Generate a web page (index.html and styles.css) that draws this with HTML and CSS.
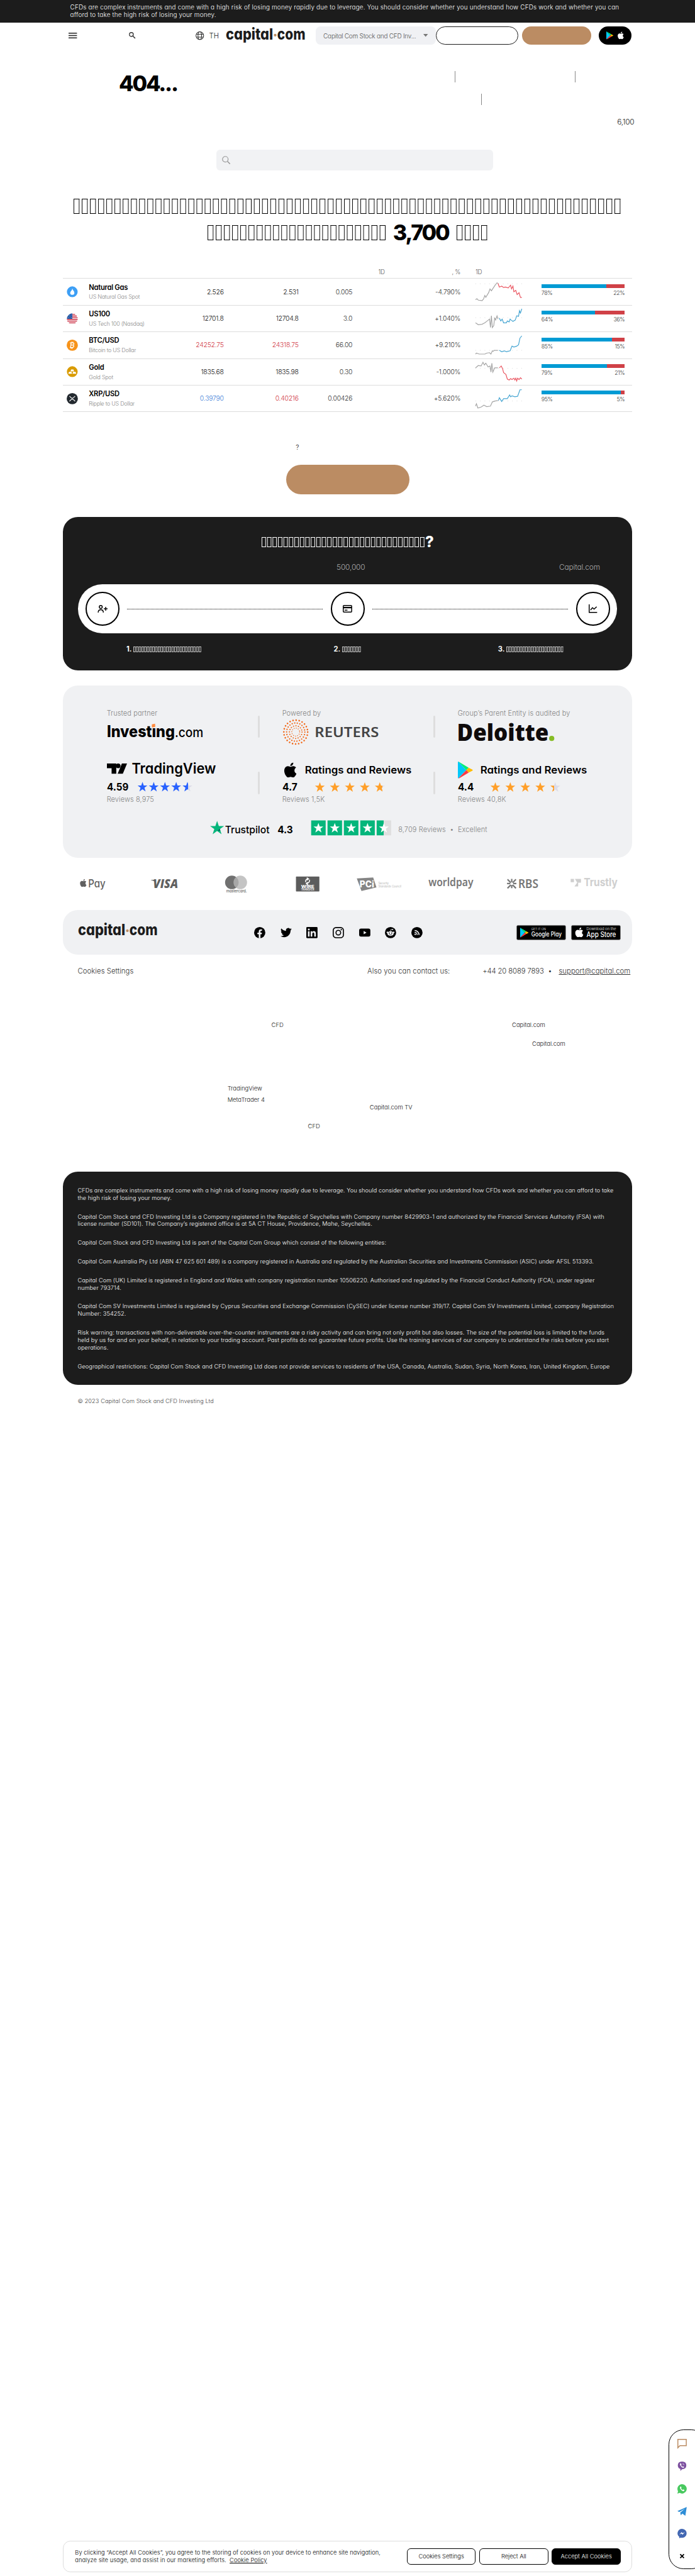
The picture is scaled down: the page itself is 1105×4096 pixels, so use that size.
FILE: index.html
```html
<!DOCTYPE html>
<html lang="th">
<head>
<meta charset="utf-8">
<title>Capital.com</title>
<link rel="stylesheet" href="styles.css">
</head>
<body>
<svg width="0" height="0" class="defs">
  <symbol id="apple" viewBox="0 0 24 24"><path d="M12.152 6.896c-.948 0-2.415-1.078-3.96-1.04-2.04.027-3.91 1.183-4.961 3.014-2.117 3.675-.546 9.103 1.519 12.09 1.013 1.454 2.208 3.09 3.792 3.039 1.52-.065 2.09-.987 3.935-.987 1.831 0 2.35.987 3.96.948 1.637-.026 2.676-1.48 3.676-2.948 1.156-1.688 1.636-3.325 1.662-3.415-.039-.013-3.182-1.221-3.22-4.857-.026-3.04 2.48-4.494 2.597-4.559-1.429-2.09-3.623-2.324-4.39-2.376-2-.156-3.675 1.09-4.61 1.09zM15.53 3.83c.843-1.012 1.4-2.427 1.245-3.83-1.207.052-2.662.805-3.532 1.818-.78.896-1.454 2.338-1.273 3.714 1.338.104 2.715-.688 3.559-1.701"/></symbol>
  <symbol id="gplay" viewBox="0 0 32 36"><path d="M1 0L18 18 1 36Q0 36 0 34V2Q0 0 1 0" fill="#00c8fa"/><path d="M1 0Q2 0 3 1L23 13 18 18 1 0" fill="#00ee76"/><path d="M23 13L31 17Q33 18 31 19.500L23 23.500 18 18z" fill="#ffbc00"/><path d="M18 18L23 23.500 3 35.500Q2 36 1 36z" fill="#ff3a44"/></symbol>
  <symbol id="star" viewBox="0 0 22 22"><path d="M11 0.500L13.700 8H21.500L15.200 12.800 17.600 21 11 16.200 4.400 21 6.800 12.800 0.500 8H8.300z"/></symbol>
  <linearGradient id="b59"><stop offset=".59" stop-color="#2962ff"/><stop offset=".59" stop-color="#dcdce8"/></linearGradient>
  <linearGradient id="o70"><stop offset=".78" stop-color="#ff9f29"/><stop offset=".78" stop-color="#dcdce8"/></linearGradient>
  <linearGradient id="o40"><stop offset=".38" stop-color="#ff9f29"/><stop offset=".38" stop-color="#dcdce8"/></linearGradient>
</svg>
<div class="page">
  <div class="risk">CFDs are complex instruments and come with a high risk of losing money rapidly due to leverage. You should consider whether you understand how CFDs work and whether you can<br>afford to take the high risk of losing your money.</div>
  <header class="head">
    <svg class="burger" width="18" height="12"><path d="M0 1H18M0 6H18M0 11H18" stroke="#222" stroke-width="2"/></svg>
    <svg class="find" width="14" height="14" fill="none" stroke="#333" stroke-width="1.700"><circle cx="5.200" cy="5.200" r="4.200"/><path d="M8.300 8.300L13.300 13.300" stroke-width="2"/></svg>
    <svg class="globe" width="18" height="18" fill="none" stroke="#333" stroke-width="1.400"><circle cx="9" cy="9" r="8.200"/><ellipse cx="9" cy="9" rx="3.800" ry="8.200"/><path d="M1.500 6H16.500M1.500 12H16.500"/></svg>
    <span class="lang">TH</span>
    <svg class="brand" width="170" height="33"><text x="0" y="25" textLength="101" lengthAdjust="spacingAndGlyphs">capital</text><circle cx="105.500" cy="16" r="2.900"/><text x="110" y="25" textLength="60" lengthAdjust="spacingAndGlyphs">com</text></svg>
    <div class="picker"><span>Capital Com Stock and CFD Inv...</span><svg width="10" height="6"><path d="M0 0H10L5 6z" fill="#777"/></svg></div>
    <div class="btn ghost"></div>
    <div class="btn tan"></div>
    <div class="btn apps"><svg width="15" height="17"><use href="#gplay"/></svg><svg width="16" height="17" fill="#fff"><use href="#apple"/></svg></div>
  </header>
  <section class="lost">
    <h1>404...</h1>
    <div class="ticks"><i></i><i></i></div>
    <div class="ticks low"><i></i></div>
    <p>6,100</p>
    <div class="searchbox"><svg width="18" height="18" fill="none" stroke="#999" stroke-width="1.600"><circle cx="7" cy="7" r="6"/><path d="M11.500 11.500L17 17" stroke-width="2"/></svg></div>
  </section>
  <h2 class="title"><span class="tofu n67"></span><br><span class="tofu n22"></span><b>3,700</b><span class="tofu n4"></span></h2>

  <div class="table">
    <div class="row hd"><span class="h1d">1D</span><span class="hpc">, %</span><span class="hch">1D</span></div>
    <div class="row">
      <svg class="ic" viewBox="0 0 24 24"><circle cx="12" cy="12" r="11.500" fill="#3d9ff5"/><path d="M12 5C12 9 7.500 11 7.500 15A4.600 4.600 0 0 0 16.500 15C16.500 12 15 11 14.500 8.500L13.500 10C13.500 8 13 6 12 5" fill="#fff"/></svg>
      <div class="nm"><b>Natural Gas</b><small>US Natural Gas Spot</small></div>
      <span class="c1">2.526</span><span class="c2">2.531</span><span class="c3">0.005</span><span class="c4">-4.790%</span>
      <svg class="sp" width="100" height="41"><path class="d" d="M0 3H100"/><path class="g" d="M0 37L3 35 6 38 14 39 17 36 20 28 22 32 28 22 31 14 34 18 38 12 42 6 46 1 48 2"/><path class="r" d="M48 2L51 10 56 8 60 11 64 10 70 12 75 6 77 14 80 8 82 20 86 17 89 26 93 22 96 32 99 32"/></svg>
      <div class="mood"><i><u style="width:78%"></u></i><p><span>78%</span><span>22%</span></p></div>
    </div>
    <div class="row">
      <svg class="ic" viewBox="0 0 24 24"><circle cx="12" cy="12" r="11.500" fill="#f4f0f1"/><path d="M12 2.500H18M12 6H21.500M12 9.500H23.400M.6 13.500H23.400M1.500 17H22M5 20.700H19" stroke="#d22f45" stroke-width="1.800"/><path d="M12 .5V12H.5A11.500 11.500 0 0 1 12 .5" fill="#2157a5"/><path d="M5 5h1M9 4h1M3 9h1M6.500 8h1M10 9h1" stroke="#fff"/></svg>
      <div class="nm"><b>US100</b><small>US Tech 100 (Nasdaq)</small></div>
      <span class="c1">12701.8</span><span class="c2">12704.8</span><span class="c3">3.0</span><span class="c4">+1.040%</span>
      <svg class="sp" width="100" height="41"><path class="d" d="M0 19H100"/><path class="g" d="M0 30L6 34 14 33 20 30 25 26 30 22 32 40 34 15 36 40 39 36 41 19 43 24 46 15 48 22"/><path class="b" d="M51 20L54 26 57 22 60 30 66 30 68 26 72 28 74 22 76 24 80 27 85 24 88 15 92 16 94 4 96 9 99 0"/></svg>
      <div class="mood"><i><u style="width:64%"></u></i><p><span>64%</span><span>36%</span></p></div>
    </div>
    <div class="row">
      <svg class="ic" viewBox="0 0 24 24"><circle cx="12" cy="12" r="12" fill="#f7931a"/><path d="M9.500 6.500L8.300 17.500M7 7H13Q16 7.300 15.500 9.500 15 11.500 12.500 11.700H9.500M12.500 11.700Q16 12.200 15.300 14.500 14.500 17 11.500 17H6.800M11 4.500L10.800 7M13.500 4.700L13.300 7M9.800 17L9.500 19.500M12.200 17L12 19.500" fill="none" stroke="#fff" stroke-width="1.700"/></svg>
      <div class="nm"><b>BTC/USD</b><small>Bitcoin to US Dollar</small></div>
      <span class="c1 dn">24252.75</span><span class="c2 dn">24318.75</span><span class="c3">66.00</span><span class="c4">+9.210%</span>
      <svg class="sp" width="100" height="41"><path class="d" d="M0 31H100"/><path class="g" d="M0 39L2 37 8 39 20 39 24 37 30 36 33 39 36 32 38 33 40 31 48 31"/><path class="b" d="M51 31L56 34 62 32 66 34 74 32 78 22 82 24 88 22 92 19 95 5 99 0"/></svg>
      <div class="mood"><i><u style="width:85%"></u></i><p><span>85%</span><span>15%</span></p></div>
    </div>
    <div class="row">
      <svg class="ic" viewBox="0 0 24 24"><circle cx="12" cy="12" r="11.500" fill="#d99b00"/><path d="M9.500 7.500H14.500L15.700 11.500H8.300zM5 12.500H10.300L11.500 16.500H3.500zM13.700 12.500H19L20.500 16.500H12.500z" fill="#fff"/></svg>
      <div class="nm"><b>Gold</b><small>Gold Spot</small></div>
      <span class="c1">1835.68</span><span class="c2">1835.98</span><span class="c3">0.30</span><span class="c4">-1.000%</span>
      <svg class="sp" width="100" height="41"><path class="d" d="M0 13H100"/><path class="g" d="M0 12L6 7 12 8 16 0 19 6 22 2 27 10 31 8 33 21 35 2 37 21 41 12 48 12"/><path class="r" d="M51 12L55 8 58 14 60 22 65 26 68 36 72 38 75 35 78 37 82 34 84 38 86 34 88 40 90 34 93 37 96 33 99 36"/></svg>
      <div class="mood"><i><u style="width:79%"></u></i><p><span>79%</span><span>21%</span></p></div>
    </div>
    <div class="row">
      <svg class="ic" viewBox="0 0 24 24"><circle cx="12" cy="12" r="12" fill="#23292f"/><path d="M6 6.500L9.500 10Q12 12 14.500 10L18 6.500M6 17.500L9.500 14Q12 12 14.500 14L18 17.500" fill="none" stroke="#fff" stroke-width="1.500"/></svg>
      <div class="nm"><b>XRP/USD</b><small>Ripple to US Dollar</small></div>
      <span class="c1 up">0.39790</span><span class="c2 dn">0.40216</span><span class="c3">0.00426</span><span class="c4">+5.620%</span>
      <svg class="sp" width="100" height="41"><path class="d" d="M0 25H100"/><path class="g" d="M0 36L2 31 5 40 12 38 18 34 24 37 32 36 36 27 42 25 48 24"/><path class="b" d="M49 24L51 18 56 26 60 20 68 20 73 12 75 16 78 14 84 16 90 15 95 1 99 1"/></svg>
      <div class="mood"><i><u style="width:95%"></u></i><p><span>95%</span><span>5%</span></p></div>
    </div>
  </div>
  <p class="ask">?</p>
  <div class="cta"></div>

  <section class="start">
    <h3><span class="tofu n30"></span><b>?</b></h3>
    <p class="facts"><span class="f1">500,000</span><span>Capital.com</span></p>
    <div class="steps">
      <div class="dot"><svg width="22" height="20" fill="none" stroke="#000" stroke-width="2"><circle cx="7" cy="5.500" r="3.200"/><path d="M1.500 17.500Q1.500 11.500 7 11.500 12.500 11.500 12.500 17.500M17.500 5.500V13.500M13.500 9.500H21.500"/></svg></div><i></i>
      <div class="dot"><svg width="20" height="16"><rect x="1" y="1" width="18" height="14" rx="1.500" fill="none" stroke="#000" stroke-width="2"/><path d="M1 5.500H19" stroke="#000" stroke-width="3"/><path d="M4 11H10" stroke="#000" stroke-width="2"/></svg></div><i></i>
      <div class="dot"><svg width="18" height="18" fill="none" stroke="#000" stroke-width="2"><path d="M1 0V17H18M4 12L8 7 11.500 10 17 5"/></svg></div>
    </div>
    <div class="labels"><span class="l1"><b>1.</b><span class="tofu n25"></span></span><span class="l2"><b>2.</b><span class="tofu n7"></span></span><span class="l3"><b>3.</b><span class="tofu n21"></span></span></div>
  </section>

  <section class="trust">
    <div class="grid">
      <div class="cell"><small>Trusted partner</small>
        <svg width="250" height="54"><text x="0" y="38" textLength="145" lengthAdjust="spacingAndGlyphs" font-size="34" font-weight="800">Investing</text><text x="145" y="38" textLength="61" lengthAdjust="spacingAndGlyphs" font-size="29" font-weight="500">.com</text><rect x="95" y="9" width="9" height="8" fill="#f0f1f3"/><path d="M96 10.500L103 9V16L96 17z" fill="#ff8a3d"/></svg></div>
      <div class="cell"><small>Powered by</small>
        <svg width="250" height="54"><g fill="none" stroke="#f26a1b" stroke-linecap="round"><circle cx="28.500" cy="27" r="25.500" stroke-width="3.500" stroke-dasharray=".01 6.670"/><circle cx="28.500" cy="27" r="19.500" stroke-width="3" stroke-dasharray=".01 5.560"/><circle cx="28.500" cy="27" r="13.500" stroke-width="2.700" stroke-dasharray=".01 5.300"/><circle cx="28.500" cy="27" r="8.500" stroke-width="2" stroke-dasharray=".01 4.450"/></g><text x="69" y="38" textLength="137" lengthAdjust="spacingAndGlyphs" font-size="29" font-weight="600" font-family="Noto Sans" fill="#444">REUTERS</text></svg></div>
      <div class="cell"><small>Group’s Parent Entity is audited by</small>
        <svg width="250" height="54"><text x="-2" y="45.500" textLength="196" lengthAdjust="spacingAndGlyphs" font-size="51" font-weight="800" font-family="Open Sans" fill="#0f0b0b">Deloitte</text><circle cx="200.500" cy="40.500" r="5.500" fill="#86bc25"/></svg></div>
      <div class="cell"><svg width="250" height="70"><path d="M0 4H20V26H10V14H0zM32 4H43L34 26H23z"/><circle cx="24" cy="9" r="5"/><text x="53" y="26" textLength="180" lengthAdjust="spacingAndGlyphs" font-size="31" font-weight="600">TradingView</text><text class="rate" x="0" y="62" textLength="46" lengthAdjust="spacingAndGlyphs">4.59</text><g fill="#2962ff"><use href="#star" x="65" y="43" width="22" height="22"/><use href="#star" x="89" y="43" width="22" height="22"/><use href="#star" x="113" y="43" width="22" height="22"/><use href="#star" x="137" y="43" width="22" height="22"/></g><use href="#star" x="161" y="43" width="22" height="22" fill="url(#b59)"/></svg><small>Reviews 8,975</small></div>
      <div class="cell"><svg width="290" height="70"><use href="#apple" x="1" y="2" width="32" height="32"/><text class="rr" x="48" y="26" textLength="228" lengthAdjust="spacingAndGlyphs">Ratings and Reviews</text><text class="rate" x="0" y="62" textLength="32" lengthAdjust="spacingAndGlyphs">4.7</text><g fill="#ff9f29"><use href="#star" x="69" y="43" width="22" height="23"/><use href="#star" x="101" y="43" width="22" height="23"/><use href="#star" x="133" y="43" width="22" height="23"/><use href="#star" x="165" y="43" width="22" height="23"/></g><use href="#star" x="197" y="43" width="22" height="23" fill="url(#o70)"/></svg><small>Reviews 1,5K</small></div>
      <div class="cell"><svg width="290" height="70"><use href="#gplay" x="0" y="0" width="32" height="36"/><text class="rr" x="48" y="26" textLength="228" lengthAdjust="spacingAndGlyphs">Ratings and Reviews</text><text class="rate" x="0" y="62" textLength="34" lengthAdjust="spacingAndGlyphs">4.4</text><g fill="#ff9f29"><use href="#star" x="69" y="43" width="22" height="23"/><use href="#star" x="101" y="43" width="22" height="23"/><use href="#star" x="133" y="43" width="22" height="23"/><use href="#star" x="165" y="43" width="22" height="23"/></g><use href="#star" x="197" y="43" width="22" height="23" fill="url(#o40)"/></svg><small>Reviews 40,8K</small></div>
    </div>
    <div class="pilot">
      <svg width="400" height="44" viewBox="0 0 400 44"><path d="M15 3L18.700 14H30L21 20.500 24.500 31.500 15 24.500 5.500 31.500 9 20.500 0 14H11.300z" fill="#04b67b"/><path d="M21 20.500L22 23.500 15 24.500z" fill="#055"/><text x="32" y="30" textLength="95" lengthAdjust="spacingAndGlyphs" font-size="22" font-weight="500">Trustpilot</text><text class="rate" x="144" y="30" textLength="33" lengthAdjust="spacingAndGlyphs">4.3</text><path d="M216 2H247V34H216zM251 2H282V34H251zM286 2H317V34H286zM321 2H352V34H321zM356 2H371V34H356z" fill="#04b67b"/><path d="M371 2H387V34H371z" fill="#dfdfdf"/><g fill="#fff"><use href="#star" x="220" y="7" width="23" height="22"/><use href="#star" x="255" y="7" width="23" height="22"/><use href="#star" x="290" y="7" width="23" height="22"/><use href="#star" x="325" y="7" width="23" height="22"/><use href="#star" x="360" y="7" width="23" height="22"/></g></svg>
      <small>8,709 Reviews &nbsp;•&nbsp; Excellent</small>
    </div>
  </section>

  <svg class="pays" width="1216" height="112" fill="#606060">
    <use href="#apple" x="35" y="45" width="17" height="17.500"/><text x="54" y="62.500" textLength="37" lengthAdjust="spacingAndGlyphs" font-size="23" font-weight="500">Pay</text>
    <text x="193" y="65" textLength="53" lengthAdjust="spacingAndGlyphs" font-size="25" font-weight="800" font-style="italic" font-family="Open Sans">VISA</text><path d="M188 47H196L198 52Q195 49 188 47.500z"/>
    <circle cx="361" cy="52.500" r="14.500" fill="#707070"/><circle cx="379" cy="52.500" r="14.500" fill="#b5b5b5" fill-opacity=".8"/><text x="349" y="74" textLength="44" lengthAdjust="spacingAndGlyphs" font-size="8.500" font-weight="500">mastercard.</text>
    <rect x="498" y="40" width="50" height="32" rx="1" fill="#5c5c5c"/><path d="M519 52Q517 47 523 45M527 47Q528 53 521 55M521 42.500L525 45 521 48M523 52L520 55 524 58" fill="none" stroke="#fff" stroke-width="2"/><text x="509" y="64" textLength="28" lengthAdjust="spacingAndGlyphs" font-size="9" font-weight="800" fill="#fff">WIRE</text><text x="509" y="70" textLength="28" lengthAdjust="spacingAndGlyphs" font-size="6" font-weight="600" fill="#fff">TRANSFER</text>
    <path d="M628 44L663 42 670 63 638 71z" fill="#858585"/><text x="634" y="63" textLength="31" lengthAdjust="spacingAndGlyphs" font-size="19" font-weight="800" fill="#fff">PCi</text><g fill="#999"><text x="674" y="56" textLength="22" lengthAdjust="spacingAndGlyphs" font-size="6.500">Security</text><text x="674" y="63.500" textLength="49" lengthAdjust="spacingAndGlyphs" font-size="6.500">Standards Council</text></g>
    <text x="781" y="61" textLength="96" lengthAdjust="spacingAndGlyphs" font-size="23" font-weight="600" font-family="Noto Sans" fill="#777">worldpay</text>
    <path d="M950 46L957 53M959 45V52M968 46L961 53M949 55H956M969 55H962M950 65L957 58M959 65V58M968 65L961 58" stroke="#777" stroke-width="3"/><text x="973" y="65" textLength="43" lengthAdjust="spacingAndGlyphs" font-size="27" font-weight="600" font-family="Noto Sans" fill="#777">RBS</text>
    <path d="M1085 45H1092V52H1085zM1094 45H1107V53H1101V61H1093L1099 53z" fill="#cfcfcf"/><text x="1113" y="61" textLength="72" lengthAdjust="spacingAndGlyphs" font-size="23" font-weight="700" fill="#cfcfcf">Trustly</text>
  </svg>

  <section class="foot">
    <svg class="brand" width="170" height="33"><text x="0" y="25" textLength="101" lengthAdjust="spacingAndGlyphs">capital</text><circle cx="105.500" cy="16" r="2.900"/><text x="110" y="25" textLength="60" lengthAdjust="spacingAndGlyphs">com</text></svg>
    <div class="social">
      <svg viewBox="0 0 24 24"><circle cx="12" cy="12" r="12"/><path d="M10 24V15.500H7V12H10V9.500Q10 5 14.300 5H17V8.200H15Q13.600 8.200 13.600 9.800V12H16.800L16.300 15.500H13.600V24z" fill="#f0f1f3"/></svg>
      <svg viewBox="0 0 24 24"><path d="M24 4.600a10 10 0 0 1-2.800.8 5 5 0 0 0 2.100-2.700 10 10 0 0 1-3.100 1.200 4.900 4.900 0 0 0-8.400 4.500A14 14 0 0 1 1.700 3.100a4.900 4.900 0 0 0 1.500 6.600 5 5 0 0 1-2.200-.6v.1a4.900 4.900 0 0 0 4 4.800 5 5 0 0 1-2.300.1 4.900 4.900 0 0 0 4.600 3.400A10 10 0 0 1 0 19.500a14 14 0 0 0 7.500 2.200c9.100 0 14-7.500 14-14v-.6A10 10 0 0 0 24 4.600z"/></svg>
      <svg viewBox="0 0 24 24"><rect width="24" height="24" rx="2"/><path d="M3.500 9H7V20.500H3.500zM9.300 9H12.600V10.600Q13.700 8.700 16.200 8.700 20.500 8.700 20.500 14V20.500H17V14.700Q17 11.800 15 11.800 12.800 11.800 12.800 14.700V20.500H9.300z" fill="#f0f1f3"/><circle cx="5.300" cy="5.400" r="2" fill="#f0f1f3"/></svg>
      <svg viewBox="0 0 24 24" fill="none" stroke="#000" stroke-width="2.200"><rect x="1.100" y="1.100" width="21.800" height="21.800" rx="6"/><circle cx="12" cy="12" r="5"/><circle cx="18.400" cy="5.600" r=".5"/></svg>
      <svg viewBox="0 0 24 24"><rect y="3.500" width="24" height="17" rx="4"/><path d="M9.700 8.500V15.500L15.800 12z" fill="#f0f1f3"/></svg>
      <svg viewBox="0 0 24 24"><circle cx="12" cy="12" r="12"/><g fill="#f0f1f3"><ellipse cx="12" cy="14" rx="6.700" ry="5"/><circle cx="5.300" cy="11.500" r="1.700"/><circle cx="18.700" cy="11.500" r="1.700"/><circle cx="16.500" cy="5.500" r="1.300"/></g><path d="M12 9.500L13 5 16 5.500" stroke="#f0f1f3" fill="none"/><circle cx="9.500" cy="13" r="1.200"/><circle cx="14.500" cy="13" r="1.200"/><path d="M9.200 16.200Q12 17.800 14.800 16.200" stroke="#000" fill="none"/></svg>
      <svg viewBox="0 0 24 24"><circle cx="12" cy="12" r="12"/><g fill="none" stroke="#f0f1f3" stroke-width="2"><path d="M7 11.500A5.500 5.500 0 0 1 12.500 17M7 7.500A9.500 9.500 0 0 1 16.500 17"/></g><circle cx="8.300" cy="15.700" r="1.600" fill="#f0f1f3"/></svg>
    </div>
    <div class="badges">
      <svg width="106" height="32" fill="#fff"><rect x=".5" y=".5" width="105" height="31" rx="3" fill="#000" stroke="#999"/><use href="#gplay" x="8" y="5" width="18" height="22"/><text x="32" y="10.500" textLength="31" lengthAdjust="spacingAndGlyphs" font-size="7">GET IT ON</text><text x="32" y="24.500" textLength="65" lengthAdjust="spacingAndGlyphs" font-size="14" font-weight="500">Google Play</text></svg>
      <svg width="106" height="32" fill="#fff"><rect x=".5" y=".5" width="105" height="31" rx="3" fill="#000" stroke="#999"/><use href="#apple" x="7" y="5" width="21" height="21"/><text x="33" y="11" textLength="63" lengthAdjust="spacingAndGlyphs" font-size="7.500">Download on the</text><text x="33" y="25.500" textLength="63" lengthAdjust="spacingAndGlyphs" font-size="15" font-weight="500">App Store</text></svg>
    </div>
  </section>
  <div class="contact"><span>Cookies Settings</span><span class="k2">Also you can contact us:</span><span class="k3">+44 20 8089 7893</span><span class="k4">•</span><u>support@capital.com</u></div>

  <nav class="links">
    <p class="a1"><span>CFD</span><span class="far">Capital.com</span></p>
    <p class="a2">Capital.com</p>
    <p class="a3">TradingView</p>
    <p class="a4">MetaTrader 4</p>
    <p class="a5">Capital.com TV</p>
    <p class="a6">CFD</p>
  </nav>

  <section class="legal">
    <p>CFDs are complex instruments and come with a high risk of losing money rapidly due to leverage. You should consider whether you understand how CFDs work and whether you can afford to take<br>the high risk of losing your money.</p>
    <p>Capital Com Stock and CFD Investing Ltd is a Company registered in the Republic of Seychelles with Company number 8429903-1 and authorized by the Financial Services Authority (FSA) with<br>license number (SD101). The Company’s registered office is at 5A CT House, Providence, Mahe, Seychelles.</p>
    <p>Capital Com Stock and CFD Investing Ltd is part of the Capital Com Group which consist of the following entities:</p>
    <p>Capital Com Australia Pty Ltd (ABN 47 625 601 489) is a company registered in Australia and regulated by the Australian Securities and Investments Commission (ASIC) under AFSL 513393.</p>
    <p>Capital Com (UK) Limited is registered in England and Wales with company registration number 10506220. Authorised and regulated by the Financial Conduct Authority (FCA), under register<br>number 793714.</p>
    <p>Capital Com SV Investments Limited is regulated by Cyprus Securities and Exchange Commission (CySEC) under license number 319/17. Capital Com SV Investments Limited, company Registration<br>Number: 354252.</p>
    <p>Risk warning: transactions with non-deliverable over-the-counter instruments are a risky activity and can bring not only profit but also losses. The size of the potential loss is limited to the funds<br>held by us for and on your behalf, in relation to your trading account. Past profits do not guarantee future profits. Use the training services of our company to understand the risks before you start<br>operations.</p>
    <p>Geographical restrictions: Capital Com Stock and CFD Investing Ltd does not provide services to residents of the USA, Canada, Australia, Sudan, Syria, North Korea, Iran, United Kingdom, Europe</p>
  </section>
  <p class="copy">© 2023 Capital Com Stock and CFD Investing Ltd</p>

  <div class="cookie">
    <p>By clicking “Accept All Cookies”, you agree to the storing of cookies on your device to enhance site navigation,<br>analyze site usage, and assist in our marketing efforts. &nbsp;<u>Cookie Policy</u></p>
    <span>Cookies Settings</span><span>Reject All</span><span class="yes">Accept All Cookies</span>
  </div>
  <aside class="chat">
    <svg viewBox="0 0 20 20"><path d="M1 19V1H19V14.500H5.500z" fill="none" stroke="#bb8c63" stroke-width="2"/></svg>
    <svg viewBox="0 0 20 22"><path d="M10 0Q20 0 20 9 20 18 10 18L6 22V17.500Q0 16 0 9 0 0 10 0" fill="#7d51a0"/><path d="M6 4Q4 5 5 8 7.500 13.500 12.500 15 15 15 15 12.500L12.500 11 11 12Q8.500 10.500 8 8L9 7 7.500 4zM10.500 4Q15 4.500 15.500 9M10.500 6.500Q13 7 13 9" fill="#fff" stroke="#7d51a0" stroke-width=".5"/></svg>
    <svg viewBox="0 0 20 20"><path d="M10 0A10 10 0 1 1 5 18.600L0 20 1.400 15A10 10 0 0 1 10 0" fill="#48c95f"/><path d="M7 5Q5 6 5.500 8.500 8 14 12.500 15 15.500 14.500 15 12.500L12.500 11.200 11.500 12.300Q8.700 11 7.900 8.700L8.800 7.600 7.800 5z" fill="#fff"/></svg>
    <svg viewBox="0 0 20 20"><path d="M0 9L20 0.500 17 19 10.500 14.500 7.500 18 6 12.500 16 4 4 11z" fill="#2f8ed6"/></svg>
    <svg viewBox="0 0 20 20"><path d="M10 0A10 9.600 0 1 1 7 18.800L4 20V17A10 9.600 0 0 1 10 0" fill="#4267b2"/><path d="M4 12.500L9 7 11.500 9.500 16 7 11 12.500 8.500 10z" fill="#fff"/></svg>
    <svg viewBox="0 0 20 20"><path d="M6 6L14 14M14 6L6 14" stroke="#000" stroke-width="2.400"/></svg>
  </aside>
</div>
</body>
</html>
```
FILE: styles.css
```css
* { box-sizing: border-box; margin: 0; padding: 0; }
html, body { background: #fff; overflow: hidden; }
body { font-family: Inter, "Noto Sans", sans-serif; font-feature-settings: "cv11"; font-weight: 300; color: #222; }
.defs { position: absolute; }
.page { position: relative; width: 1485px; height: 5503px; zoom: 0.7441; overflow: hidden; }
.page svg { display: block; flex: none; overflow: visible; }
.brand { font-size: 33px; font-weight: 800; fill: #1c1c1c; }
.brand circle { fill: #bb8c63; }

.risk { height: 48px; padding: 8px 0 0 150px; background: #1c1c1c; color: #fff; font-size: 13.300px; letter-spacing: 0.270px; line-height: 16px; white-space: nowrap; }

.head { height: 56px; padding: 8px 0 8px 146px; display: flex; align-items: center; }
.find { margin-left: 112px; }
.globe { margin-left: 128px; }
.lang { width: 46px; padding-left: 11px; font-size: 15px; }
.picker { width: 256px; height: 40px; margin: 0 1px 0 23px; padding: 0 16px; background: #f0f1f4; border-radius: 10px; display: flex; align-items: center; justify-content: space-between; font-size: 13.500px; letter-spacing: -0.350px; color: #555; white-space: nowrap; }
.btn { height: 40px; border-radius: 20px; flex: none; }
.ghost { width: 175px; border: 1.500px solid #1c1c1c; }
.tan { width: 149px; margin-left: 8px; background: #bb8c63; }
.apps { width: 70px; margin-left: 16px; background: #000; display: flex; align-items: center; justify-content: center; gap: 8px; }

.lost { height: 260px; padding-top: 48px; display: grid; grid-template-columns: 254px 718px 1fr; grid-template-rows: 48px 24px 73px 64px; }
.lost h1 { grid-column: 2; grid-row: 1 / 3; font-size: 46px; line-height: 54px; font-weight: 800; color: #000; letter-spacing: -2.900px; }
.ticks { grid-column: 3; display: flex; gap: 255px; }
.ticks i { width: 1px; height: 24px; background: #888; }
.low { padding-left: 56px; }
.lost p { grid-column: 1 / 4; padding: 26px 130px 0 0; text-align: right; font-size: 16px; letter-spacing: -0.400px; }
.searchbox { grid-column: 1 / 4; width: 592px; height: 44px; margin: 23px 0 0 462px; padding: 13px; background: #f1f2f4; border-radius: 8px; }

.tofu { --w: 0.271em; --s: 1.350px; display: inline-block; height: 0.667em; vertical-align: baseline; color: inherit;
  background:
    linear-gradient(90deg, currentColor var(--w), transparent 0) 0 0 / 0.3651em var(--s) repeat-x,
    linear-gradient(90deg, currentColor var(--w), transparent 0) 0 100% / 0.3651em var(--s) repeat-x,
    linear-gradient(90deg, currentColor var(--s), transparent 0 calc(var(--w) - var(--s)), currentColor 0 var(--w), transparent 0) 0 0 / 0.3651em 100% repeat-x; }
.n67 { width: calc(0.3651em * 67 - 0.09em); }
.n22 { width: calc(0.3651em * 22 - 0.09em); }
.n4 { width: calc(0.3651em * 4 - 0.09em); }
.n30 { width: calc(0.3651em * 30 - 0.09em); }
.n25 { width: calc(0.3651em * 25 - 0.09em); }
.n7 { width: calc(0.3651em * 7 - 0.09em); }
.n21 { width: calc(0.3651em * 21 - 0.09em); }

.title { height: 208px; padding-top: 49px; text-align: center; font-size: 48px; line-height: 56px; color: #000; white-space: nowrap; }
.title b { display: inline-block; width: 121px; margin: 0 15px; font-size: 46px; text-align: left; font-weight: 800; letter-spacing: -3px; }

.table { margin-left: 135px; width: 1216px; height: 309px; }
.row { height: 57px; display: flex; align-items: center; border-bottom: 1px solid #ddd; font-size: 14px; letter-spacing: -0.350px; color: #111; white-space: nowrap; }
.hd { height: 24px; align-items: flex-start; padding-top: 2px; font-size: 13px; line-height: 16px; color: #555; }
.h1d { width: 687px; text-align: right; }
.hpc { width: 162px; text-align: right; }
.hch { margin-left: 32px; }
.ic { width: 24px; height: 24px; margin-left: 8px; }
.nm { width: 153px; margin-left: 23px; padding-top: 3px; }
.nm b { display: block; font-size: 15px; line-height: 20px; font-weight: 600; color: #000; }
.nm small { display: block; font-size: 12px; line-height: 22px; color: #888; }
.c1, .c2, .c3, .c4 { text-align: right; }
.c1 { width: 135px; }
.c2 { width: 160px; }
.c3 { width: 115px; color: #333; }
.c4 { width: 231px; color: #333; }
.row .dn { color: #d0363f; }
.row .up { color: #3f7fd8; }
.sp { margin-left: 32px; fill: none; stroke-width: 1.600; }
.sp .d { stroke: #bbb; stroke-width: 1; stroke-dasharray: 1 8.800; }
.sp .g { stroke: #a5a5a5; }
.sp .r { stroke: #ea5560; }
.sp .b { stroke: #45a5d2; }
.mood { width: 178px; height: 33px; margin-left: 41px; }
.mood i { display: block; height: 8px; background: #d04147; }
.mood u { display: block; height: 8px; background: #009bd4; }
.mood p { display: flex; justify-content: space-between; font-size: 12px; line-height: 22px; letter-spacing: -0.600px; color: #333; }

.ask { height: 112px; padding: 67px 0 0 632px; font-size: 14px; line-height: 18px; }
.cta { width: 264px; height: 64px; margin: 0 0 48px 611px; border-radius: 32px; background: #bb8c63; }

.start { width: 1216px; height: 328px; margin-left: 135px; border-radius: 32px; background: #1c1c1c; color: #fff; }
.start h3 { height: 98px; padding-top: 32px; font-size: 32px; line-height: 42px; text-align: center; }
.start h3 b { margin-left: 2px; font-weight: 800; }
.facts { display: flex; justify-content: space-between; height: 46px; padding: 0 69px 0 584px; font-size: 16px; line-height: 20px; letter-spacing: -0.200px; color: #aaa; }
.steps { margin: 0 32px; height: 104px; padding: 0 16px; border-radius: 52px; background: #fff; display: flex; align-items: center; }
.dot { width: 72px; height: 72px; border: 2.700px solid #000; border-radius: 50%; display: flex; align-items: center; justify-content: center; }
.steps i { flex: 1; margin: 2px 17px 0; border-top: 2px dotted #000; }
.labels { display: flex; padding-top: 25px; font-size: 16px; line-height: 20px; color: #fff; }
.labels .tofu { --s: 0.800px; margin-left: 4px; color: #ccc; }
.labels b { font-size: 15px; font-weight: 700; }
.l1 { margin-left: 135px; width: 443px; }
.l2 { width: 351px; }

.trust { width: 1216px; height: 368px; margin: 32px 0 0 135px; padding-top: 50px; border-radius: 32px; background: #f0f1f3; }
.trust small { display: block; font-size: 14.800px; letter-spacing: 0.130px; line-height: 20px; color: #858585; white-space: nowrap; }
.grid { display: grid; grid-template-columns: 375px 375px 375px; grid-template-rows: 112px 120px; padding-left: 93px; height: 232px; }
.cell { position: relative; }
.cell svg { margin-top: 3px; }
.cell:nth-child(n+4) svg { margin: 0 0 2px; }
.cell:not(:nth-child(3n))::after { content: ""; position: absolute; left: 323px; top: 14px; width: 4px; height: 48px; border-radius: 2px; background: #dedede; }
.cell:nth-child(n+4)::after { top: 22px !important; }
.rr { font-size: 22px; font-weight: 600; }
.rate { font-size: 22px; font-weight: 700; }
.pilot { display: flex; padding: 4px 0 0 314px; }
.pilot small { margin: 12px 0 0 2px; }

.pays { margin-left: 135px; }
.foot { width: 1216px; height: 95px; margin-left: 135px; padding-left: 31px; border-radius: 32px; background: #f0f1f3; display: flex; }
.foot > svg { margin-top: 28px; }
.social { display: flex; gap: 32px; margin: 36px 0 0 207px; }
.social svg { width: 24px; height: 24px; }
.badges { display: flex; gap: 12px; margin: 32px 0 0 200px; }
.contact { display: flex; height: 140px; padding: 26px 0 0 166px; font-size: 15.200px; letter-spacing: 0.080px; line-height: 20px; color: #333; white-space: nowrap; }
.contact span:first-child { width: 619px; }
.k2 { width: 246px; }
.k3 { width: 140px; letter-spacing: -0.150px; }
.k4 { width: 23px; }

.links { height: 324px; padding-top: 3px; font-size: 12.700px; line-height: 16px; color: #111; }
.links p { height: 16px; white-space: nowrap; }
.a1 { display: flex; padding-left: 580px; }
.a1 span { flex: none; width: 514px; }
.a1 .far { width: auto; }
.a2 { padding-left: 1137px; margin-top: 24px; }
.a3 { padding-left: 486px; margin-top: 80px; }
.a4 { padding-left: 486px; margin-top: 8px; }
.a5 { padding-left: 790px; }
.a6 { padding-left: 658px; margin-top: 24px; }

.legal { width: 1216px; height: 456px; margin-left: 135px; padding: 32px 0 0 31px; border-radius: 32px; background: #1c1c1c; color: #fff; font-size: 12.300px; letter-spacing: 0.120px; line-height: 16px; white-space: nowrap; }
.legal p + p { margin-top: 24px; }
.copy { padding: 27px 0 0 166px; font-size: 12.300px; letter-spacing: 0.140px; line-height: 16px; color: #444; }

.cookie { position: absolute; left: 135px; top: 5429px; width: 1216px; height: 68px; padding-left: 24px; border: 1px solid #ddd; border-radius: 16px; display: flex; align-items: center; gap: 8px; font-size: 12.500px; color: #000; white-space: nowrap; }
.cookie p { width: 701px; line-height: 16px; font-size: 12.400px; letter-spacing: 0.130px; }
.cookie span { width: 147px; height: 34px; line-height: 32px; border: 1px solid #000; border-radius: 8px; text-align: center; }
.cookie .yes { background: #000; color: #fff; }
.chat { position: absolute; left: 1429px; top: 5192px; width: 80px; height: 298px; padding: 19px 0 0 17px; border: 1px solid #000; border-radius: 32px; }
.chat svg { width: 20px; height: 20px; margin-bottom: 28px; }
```
